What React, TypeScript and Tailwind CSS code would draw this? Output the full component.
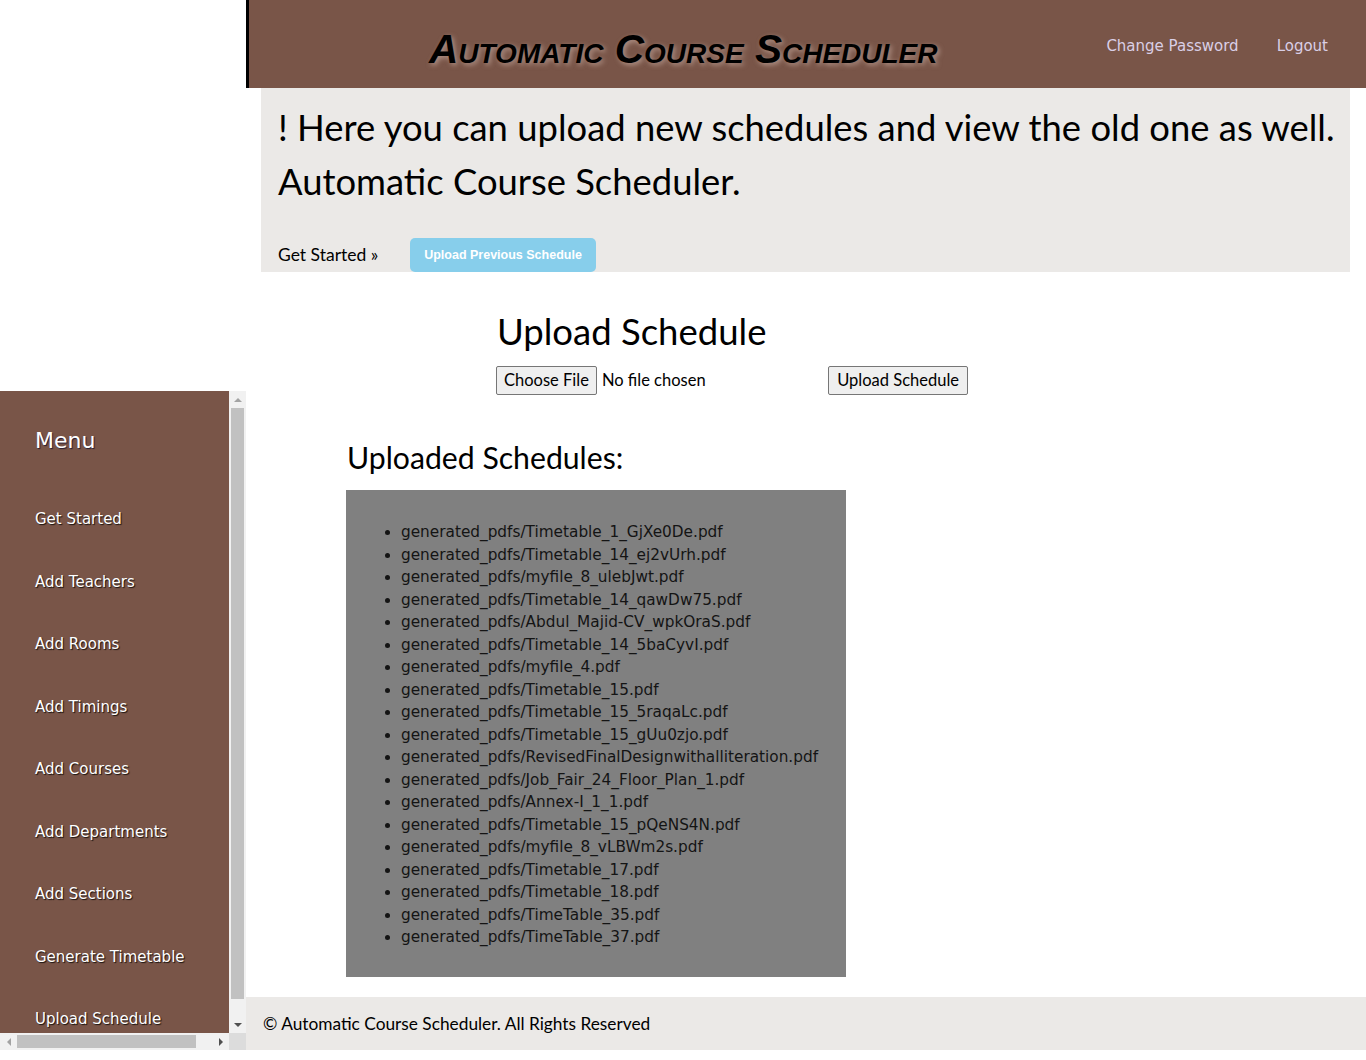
const menuItems = [
    'Get Started',
    'Add Teachers',
    'Add Rooms',
    'Add Timings',
    'Add Courses',
    'Add Departments',
    'Add Sections',
    'Generate Timetable',
    'Upload Schedule',
];

const files = [
    'generated_pdfs/Timetable_1_GjXe0De.pdf',
    'generated_pdfs/Timetable_14_ej2vUrh.pdf',
    'generated_pdfs/myfile_8_ulebJwt.pdf',
    'generated_pdfs/Timetable_14_qawDw75.pdf',
    'generated_pdfs/Abdul_Majid-CV_wpkOraS.pdf',
    'generated_pdfs/Timetable_14_5baCyvI.pdf',
    'generated_pdfs/myfile_4.pdf',
    'generated_pdfs/Timetable_15.pdf',
    'generated_pdfs/Timetable_15_5raqaLc.pdf',
    'generated_pdfs/Timetable_15_gUu0zjo.pdf',
    'generated_pdfs/RevisedFinalDesignwithalliteration.pdf',
    'generated_pdfs/Job_Fair_24_Floor_Plan_1.pdf',
    'generated_pdfs/Annex-I_1_1.pdf',
    'generated_pdfs/Timetable_15_pQeNS4N.pdf',
    'generated_pdfs/myfile_8_vLBWm2s.pdf',
    'generated_pdfs/Timetable_17.pdf',
    'generated_pdfs/Timetable_18.pdf',
    'generated_pdfs/TimeTable_35.pdf',
    'generated_pdfs/TimeTable_37.pdf',
];

const Sidebar = () => {
    return (
        <div className="grid grid-cols-[229px_17px] grid-rows-[642px_17px] h-[659px]">
            <div className="bg-[#795548] overflow-hidden font-['DejaVu_Sans',sans-serif] text-white">
                <h2 className="pl-[35px] pt-[35px] text-[22px] leading-[30px] [text-shadow:1px_1px_1px_rgba(0,0,40,0.7)]">
                    Menu
                </h2>
                <ul className="mt-[51px]">
                    {menuItems.map((item) => (
                        <li
                            key={item}
                            className="pl-[35px] h-[62.5px] leading-[24px] text-[15px] [text-shadow:1px_1px_1px_rgba(0,0,0,0.8)]"
                        >
                            {item}
                        </li>
                    ))}
                </ul>
            </div>
            {/* vertical scrollbar */}
            <div className="bg-[#f1f1f1] flex flex-col items-center">
                <div className="h-[17px] flex items-center justify-center">
                    <div className="w-0 h-0 border-l-[4px] border-r-[4px] border-b-[4px] border-l-transparent border-r-transparent border-b-[#a3a3a3]" />
                </div>
                <div className="w-[13px] h-[591px] bg-[#c1c1c1]" />
                <div className="flex-1 flex items-end pb-[6px]">
                    <div className="w-0 h-0 border-l-[4px] border-r-[4px] border-t-[4px] border-l-transparent border-r-transparent border-t-[#505050]" />
                </div>
            </div>
            {/* horizontal scrollbar */}
            <div className="bg-[#f1f1f1] flex items-center">
                <div className="w-[17px] flex justify-center">
                    <div className="w-0 h-0 border-t-[4px] border-b-[4px] border-r-[4px] border-t-transparent border-b-transparent border-r-[#a3a3a3]" />
                </div>
                <div className="w-[179px] h-[13px] bg-[#c1c1c1]" />
                <div className="flex-1 flex justify-end pr-[6px]">
                    <div className="w-0 h-0 border-t-[4px] border-b-[4px] border-l-[4px] border-t-transparent border-b-transparent border-l-[#505050]" />
                </div>
            </div>
            <div className="bg-[#dcdcdc]" />
        </div>
    );
};

const App = () => {
    return (
        <div className="flex w-[1366px] h-[1060px] bg-white text-black">
            <aside className="w-[246px] shrink-0 flex flex-col">
                <div className="h-[391px]" />
                <Sidebar />
            </aside>

            <div className="flex-1 flex flex-col">
                <header className="h-[88px] bg-[#795548] border-l-[3px] border-black flex items-start">
                    <h1 className="pl-[180px] pt-[25px] font-['Liberation_Sans',sans-serif] font-bold italic text-[40.6px] leading-[48px] [font-variant:small-caps] text-black [text-shadow:2px_2px_5px_rgba(225,200,190,0.55)]">
                        Automatic Course Scheduler
                    </h1>
                    <nav className="ml-auto flex gap-[38px] pr-[38px] pt-[35px] font-['DejaVu_Sans',sans-serif] text-[15px] leading-[22px] text-[#d9cfe6]">
                        <a>Change Password</a>
                        <a>Logout</a>
                    </nav>
                </header>

                <section className="ml-[15px] mr-[16px] h-[184px] bg-[#ebe9e7] pl-[17px] pt-[12px] flex flex-col font-['Lato',sans-serif]">
                    <p className="text-[36.4px] leading-[54px] whitespace-nowrap">
                        ! Here you can upload new schedules and view the old one as well.
                        <br />
                        Automatic Course Scheduler.
                    </p>
                    <div className="mt-auto flex items-end">
                        <span className="text-[17.5px] leading-[24px] pb-[5px] w-[132px]">
                            Get Started &raquo;
                        </span>
                        <button className="h-[34px] w-[186px] rounded-[5px] bg-[#87ceeb] text-white font-['Liberation_Sans',sans-serif] font-bold text-[12.5px]">
                            Upload Previous Schedule
                        </button>
                    </div>
                </section>

                <main className="flex-1 font-['Lato',sans-serif]">
                    <div className="pl-[250px] pt-[37px]">
                        <h2 className="text-[36.5px] leading-[44px] pl-[1px]">Upload Schedule</h2>
                        <div className="mt-[13px] flex items-center w-[472px]">
                            <button className="h-[29px] px-[7px] bg-[#efefef] border border-[#767676] rounded-[2px] text-[16.5px]">
                                Choose File
                            </button>
                            <span className="ml-[5px] text-[16.5px]">No file chosen</span>
                            <button className="ml-auto h-[29px] px-[8px] bg-[#efefef] border border-[#767676] rounded-[2px] text-[16.5px]">
                                Upload Schedule
                            </button>
                        </div>
                    </div>
                    <div className="pl-[100px] pt-[43px]">
                        <h3 className="text-[30.2px] leading-[38px] pl-[1px]">Uploaded Schedules:</h3>
                        <div className="mt-[14px] w-[500px] h-[487px] bg-[#808080] pt-[31px] pb-[29px]">
                            <ul className="list-disc pl-[55px] font-['DejaVu_Sans',sans-serif] text-[15.3px] leading-[22.5px] text-[#141414]">
                                {files.map((f) => (
                                    <li key={f}>{f}</li>
                                ))}
                            </ul>
                        </div>
                    </div>
                </main>

                <footer className="h-[53px] bg-[#ebe9e7] flex items-center pl-[17px] font-['Lato',sans-serif] text-[17.3px]">
                    &copy; Automatic Course Scheduler. All Rights Reserved
                </footer>
                <div className="h-[10px]" />
            </div>
        </div>
    );
};

export default App;
